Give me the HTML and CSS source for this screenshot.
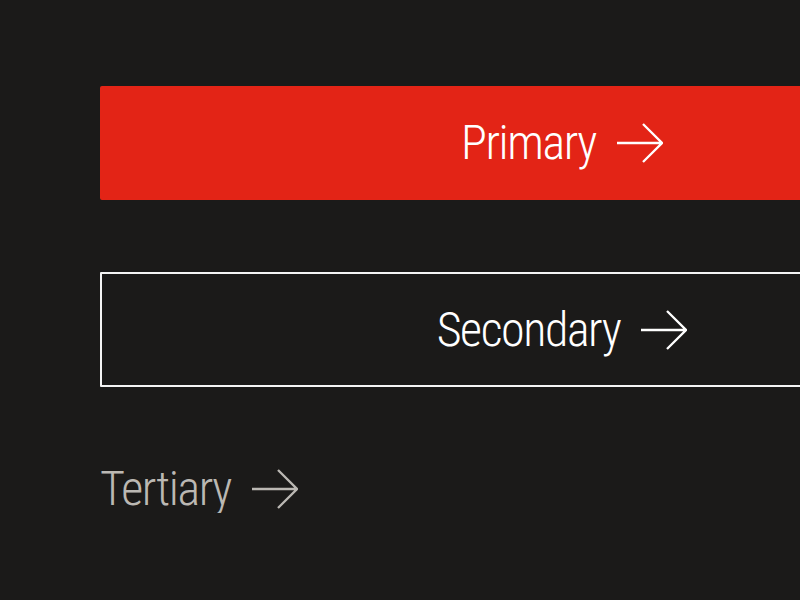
FILE: index.html
```html
<!DOCTYPE html>
<html lang="en">
<head>
<meta charset="utf-8">
<link rel="stylesheet" href="styles.css">
</head>
<body>
<main class="stack">
  <a class="btn btn-primary" href="#">
    <span class="label">Primary</span>
    <svg class="arrow" width="46" height="40" viewBox="0 0 46 40" aria-hidden="true"><path d="M0 20H45M26 1L45 20L26 39" fill="none" stroke="currentColor" stroke-width="2.3"/></svg>
  </a>
  <a class="btn btn-secondary" href="#">
    <span class="label">Secondary</span>
    <svg class="arrow" width="46" height="40" viewBox="0 0 46 40" aria-hidden="true"><path d="M0 20H45M26 1L45 20L26 39" fill="none" stroke="currentColor" stroke-width="2.3"/></svg>
  </a>
  <a class="btn-tertiary" href="#">
    <span class="label">Tertiary</span>
    <svg class="arrow" width="46" height="40" viewBox="0 0 46 40" aria-hidden="true"><path d="M0 20H45M26 1L45 20L26 39" fill="none" stroke="currentColor" stroke-width="2.3"/></svg>
  </a>
</main>
</body>
</html>
```
FILE: styles.css
```css
html, body {
  margin: 0;
  background: #1b1a19;
  overflow: hidden;
}
body {
  font-family: "Roboto", "Liberation Sans", sans-serif;
  font-stretch: 75%;
  font-weight: 350;
  font-size: 48px;
  line-height: 48px;
  letter-spacing: -1.4px;
}
.stack {
  display: flex;
  flex-direction: column;
  align-items: flex-start;
  padding: 86px 0 0 100px;
}
.btn {
  box-sizing: border-box;
  width: 924px;
  height: 114px;
  display: flex;
  align-items: center;
  justify-content: center;
  gap: 21px;
  text-decoration: none;
  color: #ffffff;
  border-radius: 2px;
}
.btn-primary {
  background: #e32416;
}
.btn-secondary {
  margin-top: 72px;
  height: 115px;
  border: 2px solid #f4f4f4;
  border-radius: 1px;
}
.btn-tertiary {
  margin-top: 78px;
  display: flex;
  align-items: center;
  gap: 21px;
  color: #bbb8b3;
  text-decoration: none;
}
.arrow {
  display: block;
  flex: none;
}
```
